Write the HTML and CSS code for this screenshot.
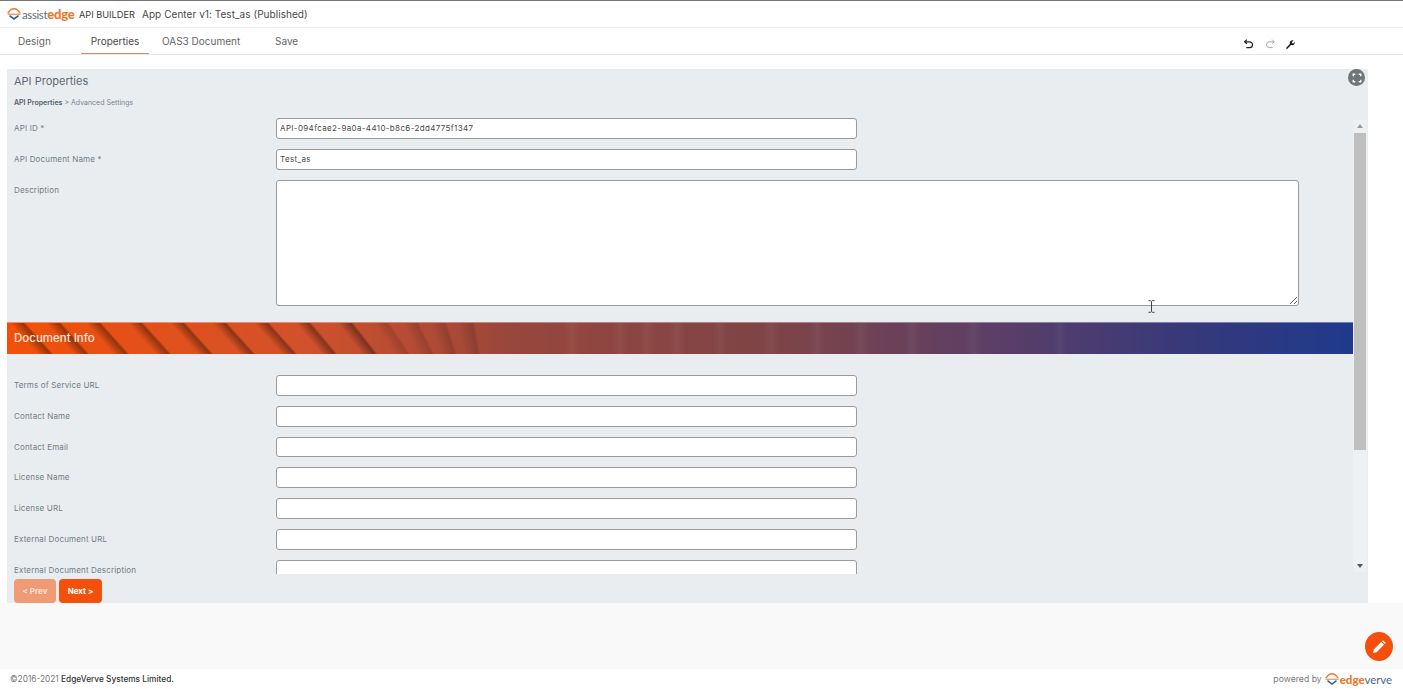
FILE: index.html
```html
<!DOCTYPE html>
<html lang="en">
<head>
<meta charset="utf-8">
<title>API Builder</title>
<link rel="stylesheet" href="styles.css">
</head>
<body>
<div class="page">
  <header class="topbar">
    <div class="logo">
      <svg class="logo-mark" viewBox="0 0 14 12" width="14" height="12"><path d="M1 5.200C3 1.600 5 .8 7 .8s4 .8 6 4.400" fill="none" stroke="#ee7c2c" stroke-width="1.600"/><path d="M.5 6.200h13" stroke="#ee7c2c" stroke-width="1.100"/><path d="M2.500 7.600 7 11l4.500-3.400" fill="none" stroke="#2e5f86" stroke-width="1.600"/></svg>
      <span class="logo-light">assist</span><span class="logo-bold">edge</span>
    </div>
    <span class="product">API BUILDER</span>
    <span class="app-title">App Center v1: Test_as (Published)</span>
  </header>
  <nav class="tabs">
    <a class="tab tab-design">Design</a>
    <a class="tab tab-props">Properties</a>
    <a class="tab tab-oas">OAS3 Document</a>
    <a class="tab tab-save">Save</a>
    <div class="tools">
      <svg viewBox="0 0 12 12" width="10" height="10"><path d="M3.400 .8.900 3.300l2.500 2.300" fill="none" stroke="#222" stroke-width="1.500"/><path d="M1.200 3.300h5.500a3.300 3.300 0 0 1 0 7H2.800" fill="none" stroke="#222" stroke-width="1.500"/></svg>
      <svg viewBox="0 0 12 12" width="10" height="10"><path d="M8.600 .8l2.500 2.500-2.500 2.300" fill="none" stroke="#a9a9a9" stroke-width="1.200"/><path d="M10.800 3.300H5.300a3.300 3.300 0 0 0 0 7h3.900" fill="none" stroke="#a9a9a9" stroke-width="1.200"/></svg>
      <svg viewBox="0 0 12 12" width="10" height="10"><path d="M1 11l5-5.200-.3-.7C5.500 3 7.500 1 10.300 1.700L8.300 3.700l.3 1.300 1.300.3 1.800-1.900c.5 2.700-1.500 4.500-3.700 3.900l-.8-.2L2.600 12z" fill="#1d1d1d"/></svg>
    </div>
  </nav>
  <main class="main">
    <section class="panel">
      <button class="expand" type="button" aria-label="Fullscreen">
        <svg viewBox="0 0 12 12" width="10" height="10"><path d="M1.500 4V1.500H4M8 1.500h2.500V4M10.500 8v2.500H8M4 10.500H1.500V8" fill="none" stroke="#fff" stroke-width="1.700"/></svg>
      </button>
      <h1 class="panel-title">API Properties</h1>
      <p class="crumbs"><b>API Properties</b> &gt; Advanced Settings</p>
      <div class="scroller">
        <div class="form">
          <div class="row"><label class="label">API ID *</label><input class="field" value="API-094fcae2-9a0a-4410-b8c6-2dd4775f1347"></div>
          <div class="row"><label class="label">API Document Name *</label><input class="field" value="Test_as"></div>
          <div class="row row-area"><label class="label">Description</label><textarea class="area"></textarea></div>
          <div class="banner">
            <svg class="banner-art" width="1346" height="32" viewBox="0 0 1346 32" preserveAspectRatio="none">
              <defs>
                <linearGradient id="sd"><stop offset="0" stop-color="#000" stop-opacity="0"/><stop offset=".8" stop-color="#000" stop-opacity=".36"/><stop offset="1" stop-color="#000" stop-opacity="0"/></linearGradient>
                <linearGradient id="sf"><stop offset="0" stop-color="#000" stop-opacity="0"/><stop offset=".8" stop-color="#000" stop-opacity=".14"/><stop offset="1" stop-color="#000" stop-opacity="0"/></linearGradient>
                <linearGradient id="lt"><stop offset="0" stop-color="#fff" stop-opacity="0"/><stop offset=".5" stop-color="#fff" stop-opacity=".045"/><stop offset="1" stop-color="#fff" stop-opacity="0"/></linearGradient>
                <rect id="st" width="16" height="32" fill="url(#sd)"/>
                <rect id="sv" width="16" height="32" fill="url(#sf)"/>
              </defs>
              <use href="#st" transform="translate(2 0) skewX(42)"/>
              <use href="#st" transform="translate(38 0) skewX(42)"/>
              <use href="#st" transform="translate(78 0) skewX(42)"/>
              <use href="#st" transform="translate(120 0) skewX(42)"/>
              <use href="#st" transform="translate(162 0) skewX(42)"/>
              <use href="#st" transform="translate(204 0) skewX(42)"/>
              <use href="#st" transform="translate(246 0) skewX(42)"/>
              <use href="#st" transform="translate(288 0) skewX(40)"/>
              <use href="#st" transform="translate(330 0) skewX(38)"/>
              <use href="#sv" transform="translate(366 0) skewX(34)"/>
              <use href="#sv" transform="translate(396 0) skewX(26)"/>
              <use href="#sv" transform="translate(424 0) skewX(18)"/>
              <use href="#sv" transform="translate(452 0) skewX(10)"/>
              <g fill="url(#lt)">
                <rect x="556" width="18" height="32"/><rect x="606" width="14" height="32"/><rect x="632" width="16" height="32"/>
                <rect x="662" width="16" height="32"/><rect x="706" width="14" height="32"/><rect x="756" width="16" height="32"/>
                <rect x="802" width="16" height="32"/><rect x="846" width="16" height="32"/><rect x="896" width="18" height="32"/>
                <rect x="958" width="18" height="32"/><rect x="1046" width="14" height="32"/>
              </g>
            </svg>
            <h2 class="banner-title">Document Info</h2>
          </div>
          <div class="row"><label class="label">Terms of Service URL</label><input class="field"></div>
          <div class="row"><label class="label">Contact Name</label><input class="field"></div>
          <div class="row"><label class="label">Contact Email</label><input class="field"></div>
          <div class="row"><label class="label">License Name</label><input class="field"></div>
          <div class="row"><label class="label">License URL</label><input class="field"></div>
          <div class="row"><label class="label">External Document URL</label><input class="field"></div>
          <div class="row"><label class="label">External Document Description</label><input class="field"></div>
        </div>
        <div class="scrollbar">
          <span class="arrow-up"></span>
          <span class="thumb"></span>
          <span class="arrow-down"></span>
        </div>
      </div>
      <div class="actions">
        <button class="btn btn-off" type="button">&lt; Prev</button>
        <button class="btn" type="button">Next &gt;</button>
      </div>
    </section>
    <div class="filler"></div>
    <button class="fab" type="button" aria-label="Edit">
      <svg viewBox="0 0 16 16" width="16" height="16"><path d="M2 14l.8-3.600 7.400-7.400 2.800 2.800-7.400 7.400z" fill="#fff"/><path d="M11 2.200l1-1 2.800 2.800-1 1z" fill="#fff"/></svg>
    </button>
    <svg class="ibeam" viewBox="0 0 7 13" width="7" height="13"><path d="M.5.700h2.200l.8.700.8-.7h2.200M3.500 1.400v10.200M.5 12.300h2.200l.8-.7.8.7h2.200" fill="none" stroke="#444" stroke-width="1"/></svg>
  </main>
  <footer class="footer">
    <p class="copy">©2016-2021 <span class="copy-name">EdgeVerve Systems Limited.</span></p>
    <div class="powered">
      <span class="powered-by">powered by</span>
      <svg class="logo-mark" viewBox="0 0 14 12" width="14" height="12"><path d="M1 5.200C3 1.600 5 .8 7 .8s4 .8 6 4.400" fill="none" stroke="#ee7c2c" stroke-width="1.500"/><path d="M.5 6.200h13" stroke="#ee7c2c" stroke-width="1"/><path d="M2.500 7.600 7 11l4.500-3.400" fill="none" stroke="#2e5f86" stroke-width="1.500"/></svg>
      <span class="ev-bold">edge</span><span class="ev-light">verve</span>
    </div>
  </footer>
</div>
</body>
</html>
```
FILE: styles.css
```css
* { box-sizing: border-box; }
html, body { margin: 0; height: 100%; }
body { font-family: Inter, "Open Sans", sans-serif; color: #4b5563; background: #fff; overflow: hidden; }
.page { height: 689px; display: flex; flex-direction: column; border-top: 1px solid #777; }

.topbar { height: 27px; flex: none; display: flex; align-items: center; padding-left: 7px; border-bottom: 1px solid #eee; }
.logo { display: flex; align-items: center; width: 72px; }
.logo-mark { flex: none; }
.logo-light { margin-left: 1px; font-family: Lato, sans-serif; font-size: 11.500px; color: #5d6f80; letter-spacing: -.4px; }
.logo-bold { font-family: Lato, sans-serif; font-weight: 900; font-size: 13px; color: #e87a2d; letter-spacing: -.2px; }
.product { font-size: 9.200px; color: #3b3b3b; width: 63px; white-space: nowrap; }
.app-title { font-size: 10px; color: #4a4a4a; letter-spacing: .05px; white-space: nowrap; }

.tabs { height: 27px; flex: none; display: flex; align-items: center; border-bottom: 1px solid #e6e6e6; font-size: 10px; color: #666; }
.tab { height: 26px; display: flex; align-items: center; white-space: nowrap; }
.tab-design { margin-left: 18px; width: 63px; }
.tab-props { width: 68px; justify-content: center; color: #4a4a4a; border-bottom: 1px solid #d58e5f; }
.tab-oas { margin-left: 13px; width: 113px; }
.tab-save { width: 40px; }
.tools { margin-left: auto; padding: 6px 108px 0 0; display: flex; gap: 10.500px; align-items: center; }

.main { flex: 1; position: relative; display: flex; flex-direction: column; padding-top: 14px; }
.panel { position: relative; flex: none; width: 1361px; height: 534px; margin-left: 7px; background: #e9edf0; display: flex; flex-direction: column; }
.panel-title { margin: 0; height: 24px; padding-left: 7px; font-size: 11px; line-height: 25px; font-weight: 400; color: #5f6a74; }
.crumbs { margin: 0 0 7px; height: 18px; padding-left: 7px; font-size: 7px; line-height: 20px; color: #7a858e; }
.crumbs b { font-weight: 600; color: #55606a; }
.expand { position: absolute; top: 0; right: 3px; width: 17px; height: 17px; padding: 0; border: 0; border-radius: 50%; background: #6f7579; display: flex; align-items: center; justify-content: center; }

.scroller { height: 456px; flex: none; display: flex; overflow: hidden; }
.form { width: 1346px; flex: none; display: flex; flex-direction: column; gap: 10px; overflow: hidden; }
.row { flex: none; display: flex; padding-left: 7px; }
.row-area { margin-bottom: 6px; }
.label { width: 262px; flex: none; font-size: 8px; line-height: 20px; color: #727d86; letter-spacing: .16px; white-space: nowrap; }
.field { width: 581px; height: 20.800px; padding: 0 3px; border: 1px solid #9b9b9b; border-radius: 3px; background: #fff; font-family: inherit; font-size: 8px; color: #4a4a4a; letter-spacing: .36px; }
.area { width: 1023px; height: 126.400px; padding: 4px; border: 1px solid #9b9b9b; border-radius: 3px; background: #fff; display: block; }

.banner { position: relative; flex: none; height: 32px; margin-bottom: 11px; overflow: hidden; background: linear-gradient(90deg, #f2500a 0%, #d2512b 22%, #97463c 38%, #7c4448 58%, #5a3e68 74%, #36397a 88%, #1f3a8c 100%); border-top: 1px solid rgba(255,255,255,.35); }
.banner-art { position: absolute; left: 0; top: -1px; }
.banner-title { position: relative; margin: 0; padding-left: 7px; font-size: 11.500px; line-height: 31px; font-weight: 500; color: #fbe6da; }

.scrollbar { width: 14px; flex: none; display: flex; flex-direction: column; align-items: center; background: #eef1f3; height: 452px; margin-top: 2px; }
.arrow-up { width: 0; height: 0; margin-top: 4px; border: 3.500px solid transparent; border-top: 0; border-bottom: 4px solid #9a9a9a; }
.thumb { width: 12px; height: 317px; margin-top: 5px; background: #bfbfbf; }
.arrow-down { width: 0; height: 0; margin-top: auto; margin-bottom: 4px; border: 3.500px solid transparent; border-bottom: 0; border-top: 4px solid #555; }

.actions { padding: 5px 0 0 7px; display: flex; gap: 3px; }
.btn { height: 24px; width: 43px; padding: 0; border: 0; border-radius: 4px; background: #f4500b; color: #fff; font-family: inherit; font-size: 8px; font-weight: 700; }
.btn-off { width: 42px; background: #f09a76; color: #fbe2d6; }

.filler { flex: 1; background: #f9f9f9; }
.fab { position: absolute; right: 10px; top: 577px; width: 28px; height: 29px; padding: 0; border: 0; border-radius: 50%; background: #f4500b; display: flex; align-items: center; justify-content: center; }
.ibeam { position: absolute; left: 1148px; top: 245px; }

.footer { height: 20px; flex: none; display: flex; align-items: center; justify-content: space-between; padding: 0 11px 0 10px; }
.copy { margin: 0; font-size: 8.300px; color: #777; white-space: nowrap; }
.copy-name { color: #333; font-weight: 500; }
.powered { display: flex; align-items: center; }
.powered-by { margin-right: 3px; font-size: 8.700px; color: #7b7b7b; }
.ev-bold { margin-left: 1px; font-family: Lato, sans-serif; font-weight: 900; font-size: 11.500px; color: #e87a2d; }
.ev-light { font-family: Lato, sans-serif; font-size: 11.500px; color: #4a6a8a; letter-spacing: -.1px; }
```
